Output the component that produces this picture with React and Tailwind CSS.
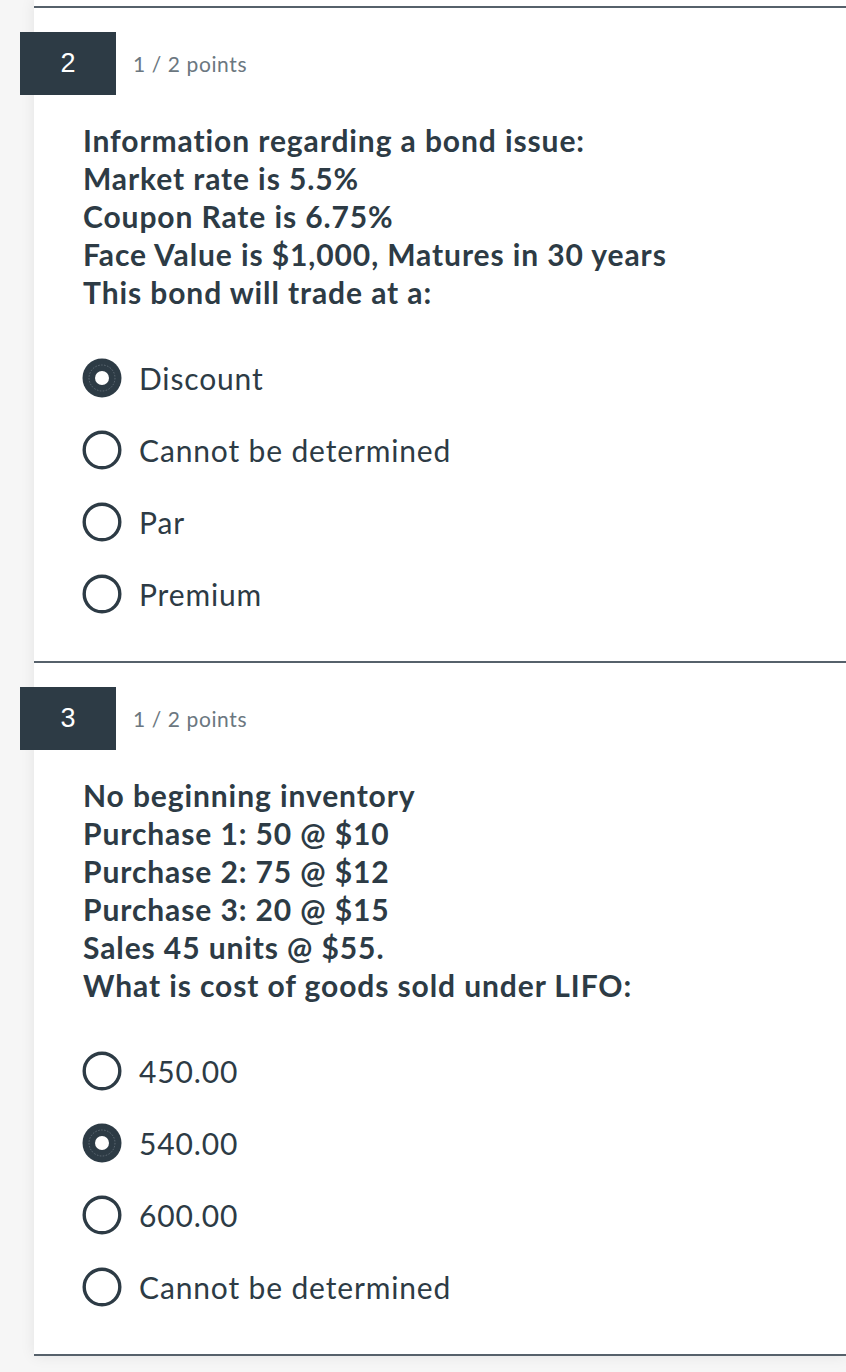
import React from "react";

const questions = [
  {
    num: 2,
    points: "1 / 2 points",
    lines: [
      "Information regarding a bond issue:",
      "Market rate is 5.5%",
      "Coupon Rate is 6.75%",
      "Face Value is $1,000, Matures in 30 years",
      "This bond will trade at a:",
    ],
    options: ["Discount", "Cannot be determined", "Par", "Premium"],
    selected: 0,
  },
  {
    num: 3,
    points: "1 / 2 points",
    lines: [
      "No beginning inventory",
      "Purchase 1: 50 @ $10",
      "Purchase 2: 75 @ $12",
      "Purchase 3: 20 @ $15",
      "Sales 45 units @ $55.",
      "What is cost of goods sold under LIFO:",
    ],
    options: ["450.00", "540.00", "600.00", "Cannot be determined"],
    selected: 1,
  },
];

const Radio = ({ checked }) => (
  <svg width="40" height="40" viewBox="0 0 40 40" className="shrink-0">
    {checked ? (
      <>
        <circle cx="20" cy="20" r="19.5" fill="#2d3b45" />
        <circle cx="20" cy="20" r="13" fill="none" stroke="#6b7680" strokeWidth="0.8" strokeDasharray="1.5 1.5" />
        <circle cx="20" cy="20" r="7" fill="#fff" />
      </>
    ) : (
      <circle cx="20" cy="20" r="17.8" fill="none" stroke="#2d3b45" strokeWidth="3.4" />
    )}
  </svg>
);

const Question = ({ q }) => (
  <div className="border-t-2 border-[#56616b] pb-[31px]">
    <div className="mt-[24px] flex items-center">
      <div className="-ml-[14px] w-[96px] h-[63px] bg-[#2d3b45] flex items-center justify-center text-white text-[27px] font-['Liberation_Sans',sans-serif]">
        {q.num}
      </div>
      <span className="ml-[17px] text-[21px] tracking-[0.6px] text-[#6b7780]">{q.points}</span>
    </div>
    <div className="mt-[26px] pl-[49px] font-bold text-[30px] tracking-[0.9px] leading-[38px] text-[#2d3b45]">
      {q.lines.map((l) => (
        <div key={l}>{l}</div>
      ))}
    </div>
    <div className="mt-[31px] pl-[48px]">
      {q.options.map((o, i) => (
        <div key={o} className="h-[72px] flex items-center gap-[17px]">
          <Radio checked={i === q.selected} />
          <span className="text-[30px] tracking-[0.85px] text-[#2d3b45]">{o}</span>
        </div>
      ))}
    </div>
  </div>
);

const App = () => {
  return (
    <div className="w-[846px] h-[1372px] overflow-hidden bg-[#f6f6f6] font-['Lato',sans-serif]">
      <div className="ml-[34px] bg-white pt-[6px] shadow-[0_0_14px_rgba(0,0,0,0.08)]">
        {questions.map((q) => (
          <Question key={q.num} q={q} />
        ))}
        <div className="border-t-2 border-[#56616b]" />
      </div>
    </div>
  );
};

export default App;
